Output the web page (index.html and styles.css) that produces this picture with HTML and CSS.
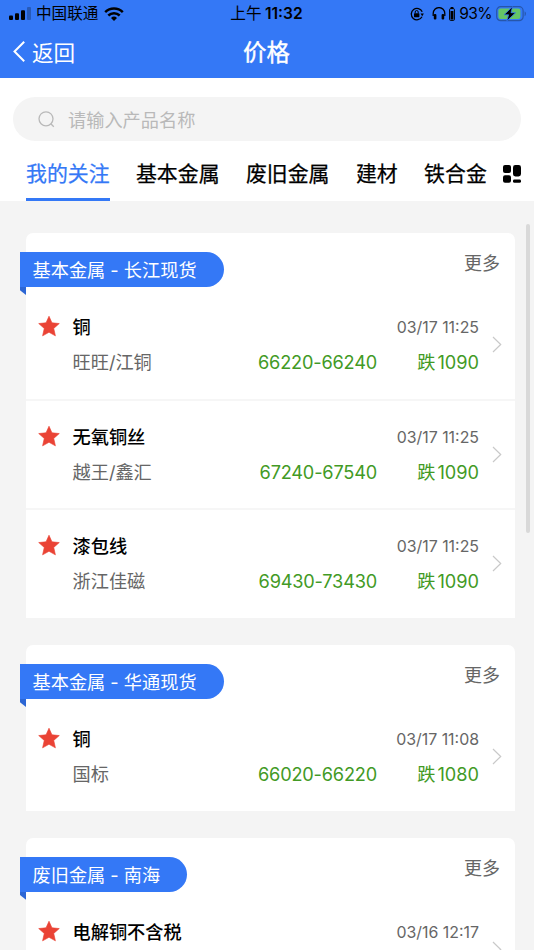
FILE: index.html
```html
<!DOCTYPE html>
<html lang="zh-CN">
<head>
  <meta charset="UTF-8" />
  <meta name="viewport" content="width=device-width, initial-scale=1.0" />
  <title>价格</title>
  <link rel="stylesheet" href="styles.css">
</head>
<body>
  <svg class="symbols" width="0" height="0">
    <symbol id="star" viewBox="0 0 20 20"><path d="M10 .2l2.8 6.3 7 .7-5.3 4.6 1.6 7.1-6.1-3.4-6.1 3.4 1.6-7.1L.2 7.2l7-.7z" fill="#ea4335" stroke="#ea4335" stroke-width=".6" stroke-linejoin="round"/></symbol>
    <symbol id="arrow" viewBox="0 0 10 17"><path d="M1 1l7.7 7.5L1 16" fill="none" stroke="#c9c9c9" stroke-width="1.2"/></symbol>
  </svg>

  <header class="header">
    <div class="status">
      <div class="status-left">
        <svg width="22" height="13" viewBox="0 0 22 13">
          <rect x="0" y="8.5" width="4" height="4.5" rx="1"/>
          <rect x="6" y="6.3" width="4" height="6.7" rx="1"/>
          <rect x="12" y="3.3" width="4" height="9.7" rx="1"/>
          <rect x="18" y="0" width="4" height="13" rx="1" opacity=".25"/>
        </svg>
        <span class="carrier">中国联通</span>
        <svg width="20" height="14" viewBox="0 0 20 14">
          <path d="M1.2 5.2a12.6 12.6 0 0 1 17.6 0M4.3 8.5a8.2 8.2 0 0 1 11.4 0" fill="none" stroke="#000" stroke-width="2.5"/>
          <path d="M10 14l-3-3a4.4 4.4 0 0 1 6 0z"/>
        </svg>
      </div>
      <div class="status-time">上午 <b>11:32</b></div>
      <div class="status-right">
        <svg class="lock" width="14" height="14" viewBox="0 0 14 14">
          <path d="M12.2 4.8A5.7 5.7 0 1 0 12 9.8" fill="none" stroke="#000" stroke-width="1.3"/>
          <path d="M10.5 6.5h3.4l-1.7 2.8z"/>
          <rect x="4" y="6.2" width="5.4" height="4" rx=".6"/>
          <path d="M5.2 6.4V5a1.5 1.5 0 0 1 3 0v1.4" fill="none" stroke="#000"/>
        </svg>
        <svg class="phones" width="14" height="13" viewBox="0 0 14 13">
          <path d="M1.2 9V6.4a5.8 5.8 0 0 1 11.6 0V9" fill="none" stroke="#000" stroke-width="1.3"/>
          <rect x="1.8" y="7" width="2.6" height="5.5" rx="1"/>
          <rect x="9.6" y="7" width="2.6" height="5.5" rx="1"/>
        </svg>
        <svg class="cell" width="6" height="14" viewBox="0 0 6 14">
          <rect x="1.6" y="0" width="2.8" height="2"/>
          <rect x=".6" y="1.6" width="4.8" height="11.8" rx="1" fill="none" stroke="#000"/>
          <rect x="1.6" y="4" width="2.8" height="8.5"/>
        </svg>
        <span class="percent">93%</span>
        <svg width="30" height="16" viewBox="0 0 30 16">
          <rect x=".7" y=".7" width="26.4" height="14" rx="4" fill="none" stroke="#2656aa" stroke-width="1.2"/>
          <path d="M28.6 5.3a3 3 0 0 1 0 5z" fill="#2656aa"/>
          <rect x="2.4" y="2.4" width="22" height="10.6" rx="2.2" fill="#65c466"/>
          <path d="M16.6 .6L8 8.8h4.6L10.8 15l8.8-8.3H15z" stroke="#3478f6" stroke-width=".8"/>
        </svg>
      </div>
    </div>
    <div class="nav">
      <div class="back">
        <svg width="12" height="21" viewBox="0 0 12 21"><path d="M11.2 .8L1.5 10.5l9.7 9.7" fill="none" stroke="#fff" stroke-width="2"/></svg>
        <span>返回</span>
      </div>
      <h1 class="title">价格</h1>
    </div>
  </header>

  <div class="top">
    <div class="search">
      <svg width="17" height="17" viewBox="0 0 17 17"><g fill="none" stroke="#b9b9b9" stroke-width="1.3"><circle cx="8" cy="7.8" r="7"/><path d="M12.8 12.8l3 3"/></g></svg>
      <span>请输入产品名称</span>
    </div>
    <div class="tabs">
      <div class="tab active">我的关注</div>
      <div class="tab">基本金属</div>
      <div class="tab">废旧金属</div>
      <div class="tab">建材</div>
      <div class="tab">铁合金</div>
      <svg class="tabs-more" width="18" height="18" viewBox="0 0 18 18">
        <rect x="0" y="0" width="8" height="8" rx="2"/>
        <rect x="10" y="0" width="8" height="11.5" rx="2.4"/>
        <rect x="0" y="10.3" width="8" height="7.5" rx="2"/>
        <rect x="10" y="14.5" width="8" height="3.3" rx="1.4"/>
      </svg>
    </div>
  </div>

  <main class="list">
    <section class="card">
      <div class="card-head">
        <div class="ribbon">基本金属 - 长江现货</div>
        <span class="more">更多</span>
      </div>
      <div class="row">
        <svg class="star"><use href="#star"/></svg>
        <div class="info">
          <div class="line"><span class="name">铜</span><span class="date">03/17 11:25</span></div>
          <div class="line"><span class="brand">旺旺/江铜</span><span class="price">66220-66240</span><span class="change"><i>跌</i>1090</span></div>
        </div>
        <svg class="arrow"><use href="#arrow"/></svg>
      </div>
      <div class="row">
        <svg class="star"><use href="#star"/></svg>
        <div class="info">
          <div class="line"><span class="name">无氧铜丝</span><span class="date">03/17 11:25</span></div>
          <div class="line"><span class="brand">越王/鑫汇</span><span class="price">67240-67540</span><span class="change"><i>跌</i>1090</span></div>
        </div>
        <svg class="arrow"><use href="#arrow"/></svg>
      </div>
      <div class="row">
        <svg class="star"><use href="#star"/></svg>
        <div class="info">
          <div class="line"><span class="name">漆包线</span><span class="date">03/17 11:25</span></div>
          <div class="line"><span class="brand">浙江佳磁</span><span class="price">69430-73430</span><span class="change"><i>跌</i>1090</span></div>
        </div>
        <svg class="arrow"><use href="#arrow"/></svg>
      </div>
    </section>

    <section class="card">
      <div class="card-head">
        <div class="ribbon">基本金属 - 华通现货</div>
        <span class="more">更多</span>
      </div>
      <div class="row">
        <svg class="star"><use href="#star"/></svg>
        <div class="info">
          <div class="line"><span class="name">铜</span><span class="date">03/17 11:08</span></div>
          <div class="line"><span class="brand">国标</span><span class="price">66020-66220</span><span class="change"><i>跌</i>1080</span></div>
        </div>
        <svg class="arrow"><use href="#arrow"/></svg>
      </div>
    </section>

    <section class="card">
      <div class="card-head">
        <div class="ribbon">废旧金属 - 南海</div>
        <span class="more">更多</span>
      </div>
      <div class="row">
        <svg class="star"><use href="#star"/></svg>
        <div class="info">
          <div class="line"><span class="name">电解铜不含税</span><span class="date">03/16 12:17</span></div>
        </div>
        <svg class="arrow"><use href="#arrow"/></svg>
      </div>
    </section>

    <div class="scrollbar"></div>
  </main>
</body>
</html>
```
FILE: styles.css
```css
* {
  box-sizing: border-box;
}

body {
  margin: 0;
  height: 950px;
  display: flex;
  flex-direction: column;
  overflow: hidden;
  background-color: #f4f4f4;
  color: #000;
  font-family: Inter, "Noto Sans CJK SC", sans-serif;
}

svg {
  display: block;
  flex-shrink: 0;
}

.symbols {
  position: absolute;
}

/* header */
.header {
  height: 78px;
  flex-shrink: 0;
  background-color: #3478f6;
}

.status {
  height: 27px;
  padding: 0 8px 0 9px;
  display: grid;
  grid-template-columns: 1fr auto 1fr;
  align-items: center;
  font-size: 15.6px;
  line-height: 27px;
}

.status-left,
.status-right {
  display: flex;
  align-items: center;
}

.carrier {
  margin: 0 6px 0 5px;
}

.status-time {
  margin-right: 2px;
}

.status-time b {
  font-weight: 600;
  margin-left: -1px;
}

.status-right {
  justify-content: flex-end;
}

.phones {
  margin-left: 8px;
}

.cell {
  margin: 0 4px 0 3px;
}

.percent {
  margin-right: 4px;
  letter-spacing: -0.6px;
}

.nav {
  height: 48px;
  padding-left: 13px;
  display: grid;
  grid-template-columns: 1fr auto 1fr;
  align-items: center;
  color: #fff;
}

.back {
  display: flex;
  align-items: center;
  gap: 7px;
  font-size: 21.6px;
}

.title {
  margin: 0 14px 0 0;
  font-size: 23.4px;
  font-weight: 400;
  -webkit-text-stroke: 0.4px #fff;
}

/* search and tabs */
.top {
  height: 123px;
  flex-shrink: 0;
  padding: 19px 13px 0;
  background-color: #fff;
}

.search {
  height: 44px;
  padding-left: 25px;
  display: flex;
  align-items: center;
  gap: 13px;
  border-radius: 22px;
  background-color: #f4f4f4;
  color: #b9b9b9;
  font-size: 18.2px;
}

.tabs {
  height: 60px;
  padding-left: 13px;
  display: flex;
  gap: 26.4px;
  font-size: 20.9px;
  line-height: 65px;
  white-space: nowrap;
}

.tab {
  -webkit-text-stroke: 0.25px currentColor;
}

.tab.active {
  color: #3478f6;
  border-bottom: 3px solid #3478f6;
}

.tabs-more {
  margin: 24px 0 0 -10px;
}

/* price cards */
.list {
  position: relative;
  flex: 1;
  min-height: 0;
  overflow: hidden;
  padding: 32px 19px 0 26px;
}

.card {
  margin-bottom: 27px;
  border-radius: 7px 7px 0 0;
  background-color: #fff;
}

.card-head {
  height: 56px;
  padding-right: 15px;
  display: flex;
  justify-content: space-between;
  align-items: flex-start;
}

.ribbon {
  position: relative;
  height: 35px;
  margin: 19px 0 0 -6px;
  padding: 0 27px 0 12.5px;
  border-radius: 0 18px 18px 0;
  background-color: #3478f6;
  color: #fff;
  font-size: 18.2px;
  line-height: 36px;
}

/* folded corner under the ribbon */
.ribbon::after {
  content: "";
  position: absolute;
  left: 0;
  top: 35px;
  width: 6px;
  height: 8px;
  background-color: #2c66d4;
  clip-path: polygon(0 0, 100% 0, 100% 100%, 0 40%);
}

.more {
  margin-top: 17px;
  color: #666;
  font-size: 18px;
  line-height: 28px;
}

.row {
  height: 109.7px;
  padding: 24px 13px 0 12px;
  display: flex;
}

.row + .row {
  padding-top: 22px;
  border-top: 2px solid #f6f6f6;
}

.star {
  width: 22px;
  height: 21px;
  margin: 3px 12.5px 0 0;
}

.info {
  width: 406.5px;
}

.line {
  height: 28px;
  margin-bottom: 7px;
  display: flex;
  justify-content: space-between;
  font-size: 18.2px;
  line-height: 28px;
}

.name {
  font-weight: 500;
}

.date {
  color: #666;
  font-size: 15.9px;
  line-height: 29px;
}

.brand {
  color: #666;
}

.price {
  margin-left: auto;
  color: #429a25;
  letter-spacing: -0.2px;
}

.change {
  width: 102px;
  text-align: right;
  color: #429a25;
}

.change i {
  margin-right: 2px;
  font-style: normal;
}

.arrow {
  width: 10px;
  height: 17px;
  margin: 23px 0 0 13px;
}

.scrollbar {
  position: absolute;
  top: 23px;
  right: 4px;
  width: 4px;
  height: 309px;
  border-radius: 2px;
  background-color: #d9d9d9;
}
```
